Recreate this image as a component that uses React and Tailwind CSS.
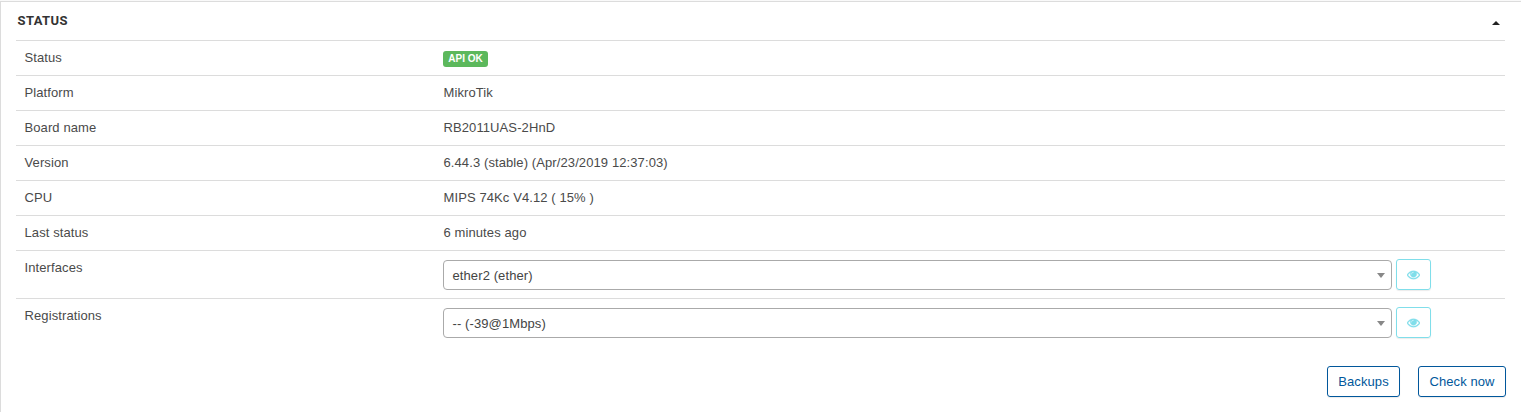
const rows = [
  ["Platform", "MikroTik"],
  ["Board name", "RB2011UAS-2HnD"],
  ["Version", "6.44.3 (stable) (Apr/23/2019 12:37:03)"],
  ["CPU", "MIPS 74Kc V4.12 ( 15% )"],
  ["Last status", "6 minutes ago"],
];

function Row({ label, children, tall }) {
  return (
    <div className={`flex border-t border-[#dcdcdc] pl-[8.5px] ${tall ? "h-12" : "h-[35px]"}`}>
      <div className="w-[418.5px] shrink-0 pt-2 leading-[18px]">{label}</div>
      <div className={`grow leading-[18px] ${tall ? "pt-2" : "pt-2 pl-[0.5px]"}`}>{children}</div>
    </div>
  );
}

function Eye() {
  return (
    <svg viewBox="0 0 1792 1792" className="size-[13px]" fill="currentColor" stroke="currentColor" strokeWidth="50">
      <path d="M1664 960q-152-236-381-353 61 104 61 225 0 185-131.500 316.500t-316.500 131.500-316.500-131.500-131.500-316.500q0-121 61-225-229 117-381 353 133 205 333.500 326.500t434.500 121.500 434.500-121.500 333.500-326.500zm-720-384q0-20-14-34t-34-14q-125 0-214.500 89.500t-89.500 214.500q0 20 14 34t34 14 34-14 14-34q0-86 61-147t147-61q20 0 34-14t14-34zm848 384q0 34-20 69-140 230-376.500 368.500t-499.500 138.500-499.500-139-376.500-368q-20-35-20-69t20-69q140-229 376.500-368t499.500-139 499.500 139 376.500 368q20 35 20 69z" />
    </svg>
  );
}

function Select({ value }) {
  return (
    <div className="flex">
      <div className="mt-px flex h-[30px] w-[949px] items-center justify-between rounded-[4px] border border-[#aaa] pr-1.5 pl-[8.5px] text-[#444]">
        <span className="pt-0.5">{value}</span>
        <svg className="h-[5px] w-2" viewBox="0 0 8 5" fill="#888"><path d="M0 0h8L4 5z" /></svg>
      </div>
      <button className="ml-1 flex h-[31px] w-[35px] items-center justify-center rounded-[3px] border border-[#80deea] pb-px text-[#80deea] shadow-[0_1px_1px_rgba(0,0,0,0.08)]">
        <Eye />
      </button>
    </div>
  );
}

export default function App() {
  return (
    <div className="h-[412px] bg-[#f9f9f9] pt-px font-['Liberation_Sans',Arial,sans-serif] text-[13px] tracking-[0.1px] text-[#4a4a4a]">
      <section className="h-[411px] border-t border-l border-[#dcdcdc] bg-white pr-4 pl-[15px]">
        <header className="flex h-[38px] items-center justify-between pr-[5px] pl-[1.5px]">
          <h2 className="font-['Roboto',sans-serif] font-bold tracking-[0.4px] text-[#333]">STATUS</h2>
          <svg className="mt-[3px] h-1 w-2" viewBox="0 0 8 4" fill="#222"><path d="M0 4h8L4 0z" /></svg>
        </header>
        <Row label="Status">
          <span className="mt-[2px] -ml-[0.5px] flex h-4 w-[45px] items-center justify-center rounded-[3px] bg-[#5cb85c] text-[10px] font-bold tracking-normal text-white">API OK</span>
        </Row>
        {rows.map(([label, value]) => <Row key={label} label={label}>{value}</Row>)}
        <Row label="Interfaces" tall><Select value="ether2 (ether)" /></Row>
        <Row label="Registrations" tall><Select value="-- (-39@1Mbps)" /></Row>
        <div className="-mr-px flex justify-end gap-[18px] pt-5 text-[#01579b]">
          <button className="h-[31px] w-[73px] rounded-[3px] border border-[#01579b] shadow-[0_1px_1px_rgba(0,0,0,0.08)]">Backups</button>
          <button className="h-[31px] w-[88px] rounded-[3px] border border-[#01579b] shadow-[0_1px_1px_rgba(0,0,0,0.08)]">Check now</button>
        </div>
      </section>
    </div>
  );
}
